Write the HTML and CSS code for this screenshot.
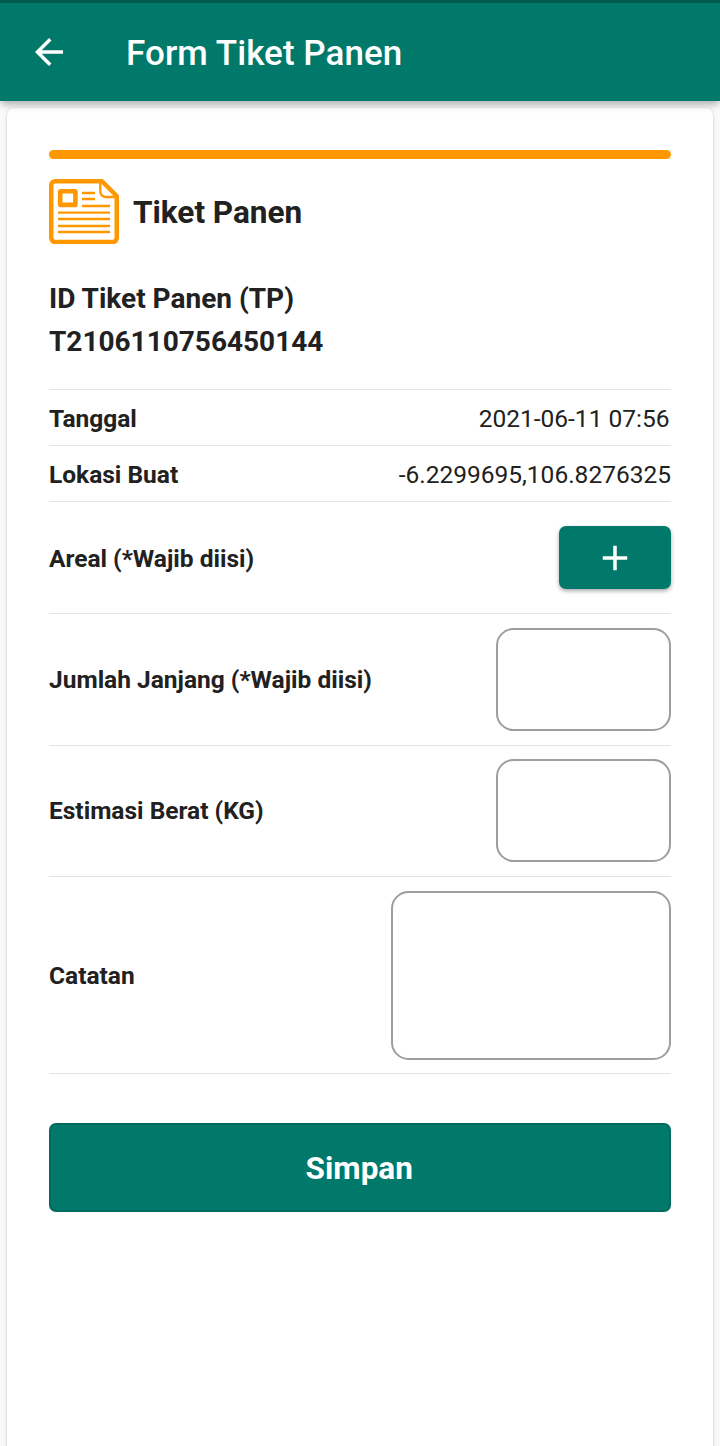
FILE: index.html
```html
<!DOCTYPE html>
<html lang="id">
<head>
<meta charset="utf-8">
<title>Form Tiket Panen</title>
<link rel="stylesheet" href="styles.css">
</head>
<body>
<div class="screen">
  <header class="appbar">
    <button class="back" aria-label="Kembali">
      <svg viewBox="0 0 24 24"><path d="M20 11H7.83l5.59-5.59L12 4l-8 8 8 8 1.41-1.41L7.83 13H20v-2z"/></svg>
    </button>
    <h1 class="appbar-title">Form Tiket Panen</h1>
  </header>
  <main class="card">
    <div class="accent"></div>
    <div class="heading">
      <svg class="ticket-icon" viewBox="0 0 70 65">
        <path d="M6 2.25H53L67.75 17V59a4 4 0 0 1-4 4H6.25a4 4 0 0 1-4-4V6.25a4 4 0 0 1 4-4z" fill="none" stroke="#ff9800" stroke-width="4.5" stroke-linejoin="round"/>
        <path d="M51.3 3v9.5a5.5 5.5 0 0 0 5.5 5.5H68" fill="none" stroke="#ff9800" stroke-width="2.3"/>
        <rect x="11.2" y="12.3" width="15.2" height="13.6" rx=".5" fill="none" stroke="#ff9800" stroke-width="4.6"/>
        <path d="M33 14H46M33 20H46M33 27H61M9 33.7H61M9 40H61M9 47H61M9 53H61" fill="none" stroke="#ff9800" stroke-width="2.3"/>
      </svg>
      <h2 class="heading-title">Tiket Panen</h2>
    </div>
    <div class="ticket-id">
      <div>ID Tiket Panen (TP)</div>
      <div class="ticket-number">T2106110756450144</div>
    </div>
    <div class="rows">
      <div class="row info"><span class="label">Tanggal</span><span class="value date">2021-06-11 07:56</span></div>
      <div class="row info"><span class="label">Lokasi Buat</span><span class="value">-6.2299695,106.8276325</span></div>
      <div class="row areal"><span class="label">Areal (*Wajib diisi)</span>
        <button class="add" aria-label="Tambah"><svg viewBox="0 0 24 24"><path d="M19 13h-6v6h-2v-6H5v-2h6V5h2v6h6v2z"/></svg></button>
      </div>
      <div class="row field"><label class="label" for="janjang">Jumlah Janjang (*Wajib diisi)</label><input class="input" id="janjang"></div>
      <div class="row field"><label class="label" for="berat">Estimasi Berat (KG)</label><input class="input" id="berat"></div>
      <div class="row note"><label class="label" for="catatan">Catatan</label><textarea class="input textarea" id="catatan"></textarea></div>
    </div>
    <button class="save">Simpan</button>
  </main>
</div>
</body>
</html>
```
FILE: styles.css
```css
* { box-sizing: border-box; }
body { margin: 0; background: #fafafa; color: #212121; font-family: Roboto, sans-serif; }
h1, h2 { margin: 0; }
button { padding: 0; border: 0; font-family: inherit; }
.screen { display: flex; flex-direction: column; height: 1446px; overflow: hidden; }
.appbar {
  z-index: 1; position: relative; flex: none; display: flex; align-items: center;
  height: 101px; padding: 0 28px; border-top: 3px solid #00594f;
  background: #00796b; color: #fff;
  box-shadow: 0 3.5px 7px -1.75px rgba(0,0,0,.18), 0 4px 8px rgba(0,0,0,.12), 0 1.75px 12px rgba(0,0,0,.08);
}
.back { display: flex; width: 42px; height: 42px; background: none; }
.back svg { width: 42px; height: 42px; fill: #fff; }
.appbar-title { margin-left: 56px; padding-top: 3px; font-size: 35px; line-height: 42px; font-weight: 500; letter-spacing: .05px; }
.card {
  flex: 1; display: flex; flex-direction: column; margin: 7px 7px -10px; padding: 42px;
  border-radius: 7px; background: #fff;
  box-shadow: 0 3.5px 1.75px -1.75px rgba(0,0,0,.2), 0 1.75px 1.75px rgba(0,0,0,.14), 0 1.75px 5.25px rgba(0,0,0,.12);
}
.accent { height: 9px; border-radius: 4.5px; background: #ff9800; }
.heading { display: flex; align-items: center; margin-top: 20px; height: 65px; gap: 14px; }
.ticket-icon { width: 70px; height: 65px; }
.heading-title { padding-top: 2px; font-size: 31.5px; line-height: 38px; font-weight: 700; }
.ticket-id { margin-top: 33px; font-size: 28px; line-height: 43px; font-weight: 700; }
.rows { margin-top: 26px; border-top: 1px solid #e4e4e4; }
.row { display: flex; align-items: center; justify-content: space-between; height: 56px; border-bottom: 1px solid #e4e4e4; font-size: 24.5px; line-height: 29px; }
.label { font-weight: 700; }
.info { padding-top: 2px; }
.date { padding-right: 1.5px; }
.areal { height: 112px; }
.areal .label { padding-top: 2px; }
.add { display: flex; align-items: center; justify-content: center; width: 112px; height: 63px; border-radius: 7px; background: #00796b; box-shadow: 0 2px 4px rgba(0,0,0,.35); }
.add svg { width: 42px; height: 42px; fill: #fff; }
.field { height: 131.5px; }
.input { width: 175px; height: 103px; margin: 0; border: 2px solid #9e9e9e; border-radius: 17.5px; background: #fff; outline: 0; }
.note { height: 197px; }
.textarea { width: 280px; height: 169px; resize: none; }
.save { flex: none; margin-top: 49px; height: 89px; padding: 2px 1.5px 0 0; border: 2px solid #006b5e; border-radius: 7px; background: #00796b; color: #fff; font-size: 31.5px; font-weight: 700; }
```
